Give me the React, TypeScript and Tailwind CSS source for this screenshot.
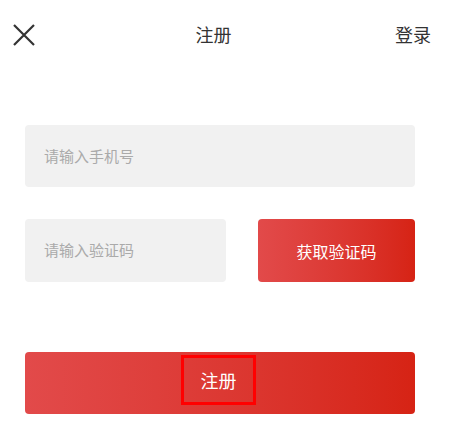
export default function App() {
  return (
    <div
      className="w-[449px] h-[436px] bg-white overflow-hidden"
      style={{ fontFamily: '"Noto Sans CJK SC", "Noto Sans", sans-serif' }}
    >
      {/* 顶部导航 */}
      <div className="h-[70px] flex items-center justify-between pl-[12px] pr-[18px] pb-[1px]">
        <svg width="24" height="24" viewBox="0 0 24 24" className="text-[#333]">
          <path d="M2 2 L22 22 M22 2 L2 22" stroke="currentColor" strokeWidth="2.2" fill="none" />
        </svg>
        <div className="text-[18px] text-[#333] -ml-[4px]">注册</div>
        <div className="text-[18px] text-[#333]">登录</div>
      </div>

      <div className="px-[25px] pt-[55px] pr-[34px]">
        <div className="h-[62px] rounded-[4px] bg-[#f1f1f1] flex items-center px-[19px] text-[15px] text-[#aaa]">
          请输入手机号
        </div>

        <div className="mt-[32px] flex gap-[32px]">
          <div className="w-[201px] h-[63px] rounded-[4px] bg-[#f1f1f1] flex items-center px-[19px] text-[15px] text-[#aaa]">
            请输入验证码
          </div>
          <button className="flex-1 h-[63px] rounded-[4px] bg-gradient-to-r from-[#e24a4a] to-[#d62314] text-white text-[16px] flex items-center justify-center">
            获取验证码
          </button>
        </div>

        <button className="mt-[70px] w-full h-[62px] rounded-[4px] bg-gradient-to-r from-[#e24a4a] to-[#d62314] flex items-center justify-center">
          <span className="w-[75px] h-[50px] border-[3px] border-[#ff0000] flex items-center justify-center text-white text-[18px] mb-[6px] -ml-[3px]">
            注册
          </span>
        </button>
      </div>
    </div>
  );
}
